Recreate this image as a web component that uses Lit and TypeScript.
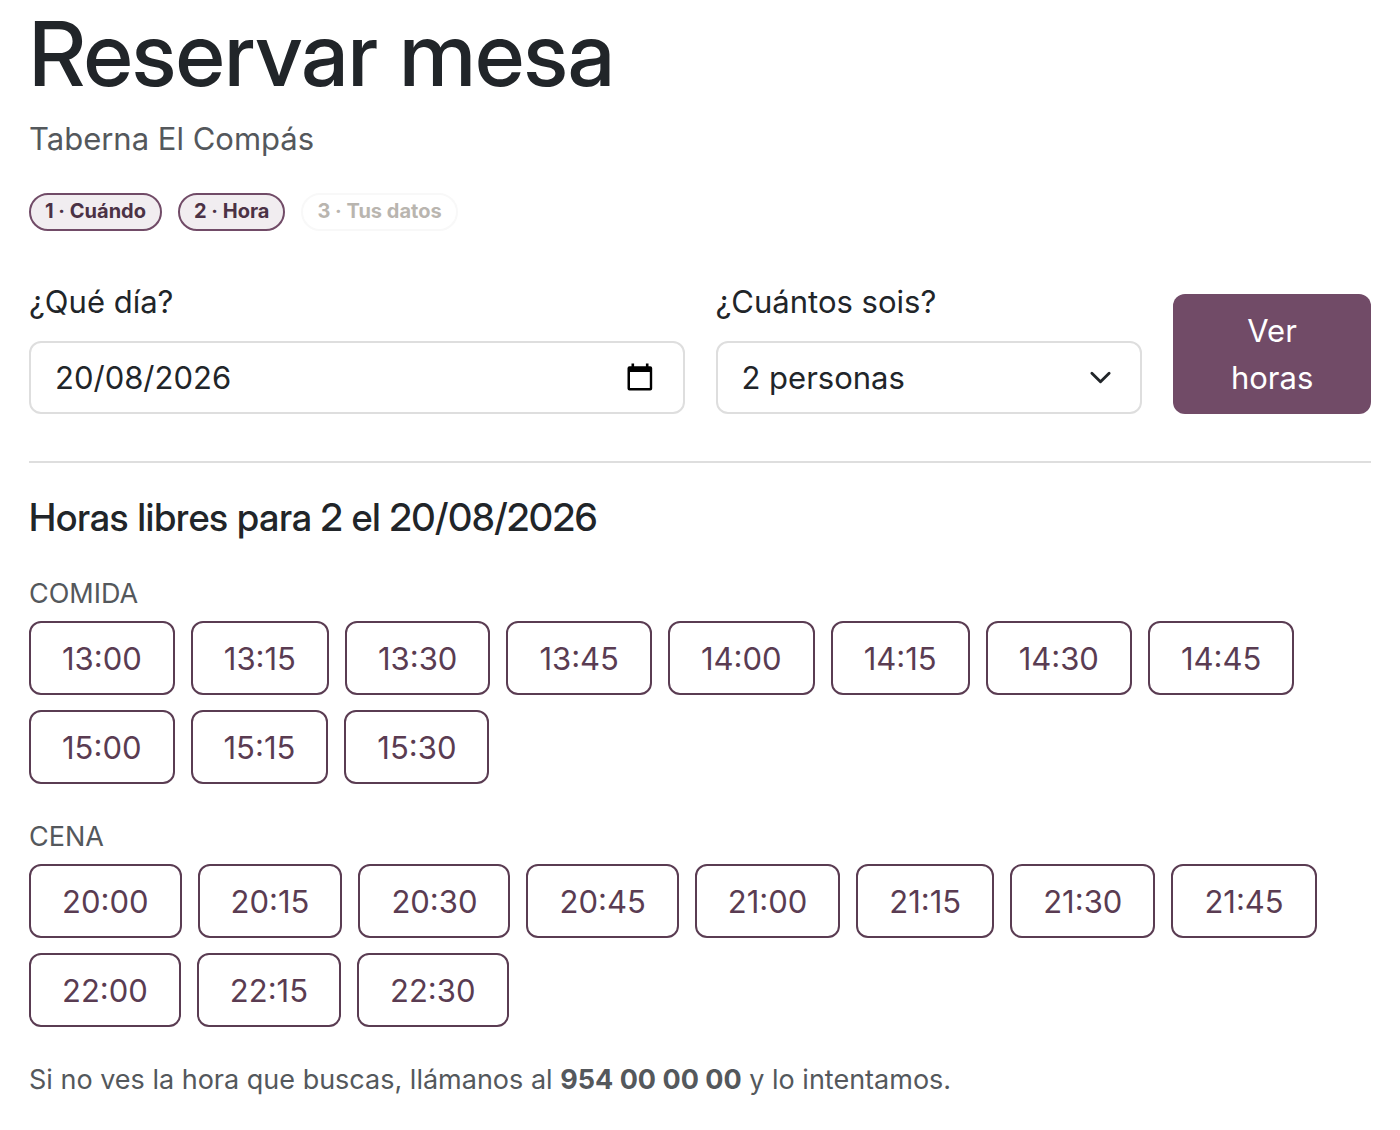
import { LitElement, html, css } from "lit";
import { customElement, state } from "lit/decorators.js";
import { classMap } from "lit/directives/class-map.js";

interface Shift {
  name: string;
  slots: string[];
}

const STEPS = ["Cuándo", "Hora", "Tus datos"];

const SHIFTS: Shift[] = [
  {
    name: "Comida",
    slots: ["13:00", "13:15", "13:30", "13:45", "14:00", "14:15", "14:30", "14:45", "15:00", "15:15", "15:30"],
  },
  {
    name: "Cena",
    slots: ["20:00", "20:15", "20:30", "20:45", "21:00", "21:15", "21:30", "21:45", "22:00", "22:15", "22:30"],
  },
];

@customElement("app-root")
export class AppRoot extends LitElement {
  @state() private currentStep = 2;
  @state() private guests = 2;
  @state() private date = "20/08/2026";

  static styles = css`
    :host {
      display: block;
      background: #fff;
      color: #212529;
      font-family: Inter, "Liberation Sans", sans-serif;
      font-size: 31px;
      line-height: 47px;
    }
    * {
      box-sizing: border-box;
    }
    h1,
    h2,
    h3,
    p,
    ol {
      margin: 0;
      padding: 0;
      font-weight: inherit;
    }
    button,
    input,
    select {
      margin: 0;
      font: inherit;
      color: inherit;
    }
    .page {
      padding: 0 29px 24px;
    }
    .title,
    .results {
      font-family: "Inter Display", Inter, "Liberation Sans", sans-serif;
      font-weight: 500;
    }
    .title {
      font-size: 89px;
      line-height: 107px;
    }
    .place {
      margin-top: 8px;
      color: #54585c;
    }
    .steps {
      display: flex;
      gap: 16px;
      margin-top: 31px;
      list-style: none;
    }
    .step {
      padding: 0 14px 1px;
      border: 2px solid #f8f8f8;
      border-radius: 20px;
      font-size: 20px;
      line-height: 33px;
      font-weight: 700;
      color: #b9b5af;
    }
    .step.done {
      border-color: #714b67;
      background: #f1edf0;
      color: #4b3245;
    }
    .search {
      display: grid;
      grid-template-columns: repeat(12, minmax(0, 1fr));
      column-gap: 31px;
      align-items: end;
      margin-top: 47px;
      padding-bottom: 47px;
      border-bottom: 2px solid #dedede;
    }
    .day {
      grid-column: span 6;
    }
    .guests {
      grid-column: span 4;
    }
    .label {
      display: block;
      margin-bottom: 16px;
    }
    .control {
      display: flex;
      align-items: center;
      position: relative;
    }
    .field {
      width: 100%;
      height: 73px;
      padding: 0 24px;
      border: 2px solid #dedede;
      border-radius: 12px;
      background: #fff;
      appearance: none;
    }
    .picker {
      position: absolute;
      right: 30px;
      display: flex;
      padding: 0;
      border: 0;
      background: none;
    }
    .chevron {
      position: absolute;
      right: 30px;
      pointer-events: none;
    }
    .submit {
      grid-column: span 2;
      padding: 13px 32px;
      border: 0;
      border-radius: 12px;
      background: #714b67;
      color: #fff;
    }
    .results {
      margin-top: 30px;
      font-size: 38px;
      line-height: 48px;
    }
    .shift {
      margin-top: 32px;
    }
    .shift-name {
      font-size: 27px;
      line-height: 41px;
      text-transform: uppercase;
      color: #54585c;
    }
    .slots {
      display: flex;
      flex-wrap: wrap;
      gap: 15px 16px;
      margin-top: 7px;
    }
    .slot {
      height: 74px;
      padding: 0 31px;
      border: 2px solid #5a3c52;
      border-radius: 12px;
      background: #fff;
      color: #5a3c52;
    }
    .note {
      margin-top: 32px;
      font-size: 27px;
      line-height: 41px;
      color: #54585c;
    }
    .phone {
      font-weight: 700;
    }
  `;

  render() {
    return html`
      <main class="page">
        <h1 class="title">Reservar mesa</h1>
        <p class="place">Taberna El Compás</p>
        <ol class="steps">
          ${STEPS.map(
            (name, i) => html`<li class=${classMap({ step: true, done: i < this.currentStep })}>${i + 1} · ${name}</li>`,
          )}
        </ol>
        <form class="search" @submit=${(e: Event) => e.preventDefault()}>
          <div class="day">
            <label class="label" for="day">¿Qué día?</label>
            <div class="control">
              <input class="field" id="day" type="text" inputmode="numeric" .value=${this.date} />
              <button class="picker" type="button" aria-label="Abrir calendario">
                <svg width="30" height="30" viewBox="0 0 30 30" aria-hidden="true">
                  <path
                    fill="#000"
                    fill-rule="evenodd"
                    d="M6.5 0.5h2.6v2.7h11.8V0.5h2.6v2.7h1.7a2 2 0 0 1 2 2v20.3a2 2 0 0 1-2 2H4.5a2 2 0 0 1-2-2V5.2a2 2 0 0 1 2-2h2zM5 9v16h19.8V9z"
                  />
                </svg>
              </button>
            </div>
          </div>
          <div class="guests">
            <label class="label" for="guests">¿Cuántos sois?</label>
            <div class="control">
              <select class="field" id="guests">
                ${[1, 2, 3, 4, 5, 6].map(
                  (n) => html`<option value=${n} ?selected=${n === this.guests}>${n} ${n === 1 ? "persona" : "personas"}</option>`,
                )}
              </select>
              <svg class="chevron" width="23" height="23" viewBox="0 0 16 16" aria-hidden="true">
                <path fill="none" stroke="#212529" stroke-width="2" stroke-linecap="round" stroke-linejoin="round" d="m2 5 6 6 6-6" />
              </svg>
            </div>
          </div>
          <button class="submit" type="submit">Ver horas</button>
        </form>
        <h2 class="results">Horas libres para ${this.guests} el ${this.date}</h2>
        ${SHIFTS.map(
          (shift) => html`
            <section class="shift">
              <h3 class="shift-name">${shift.name}</h3>
              <div class="slots">
                ${shift.slots.map((slot) => html`<button class="slot" type="button">${slot}</button>`)}
              </div>
            </section>
          `,
        )}
        <p class="note">Si no ves la hora que buscas, llámanos al <strong class="phone">954 00 00 00</strong> y lo intentamos.</p>
      </main>
    `;
  }
}
